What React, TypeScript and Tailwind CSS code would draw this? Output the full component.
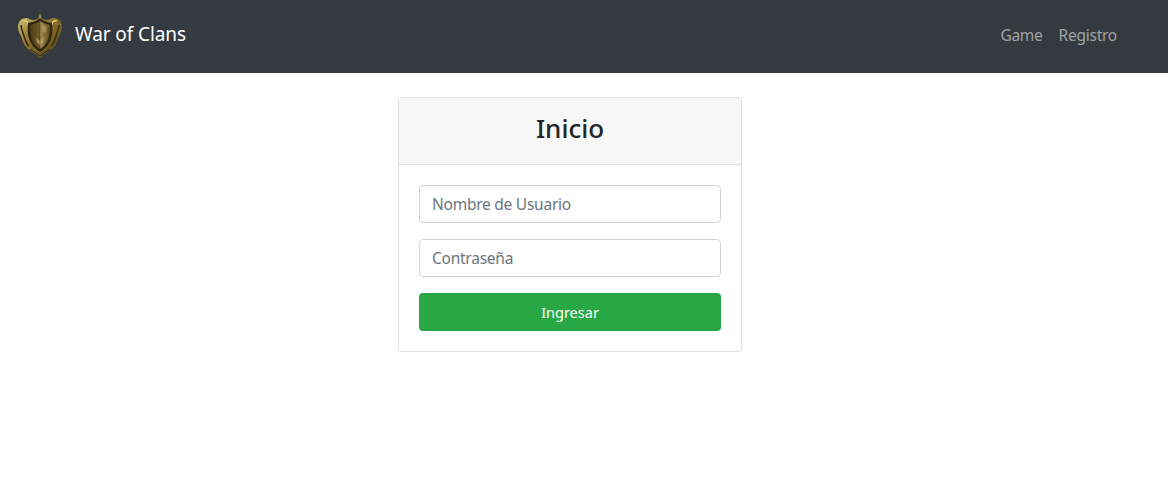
import React from 'react';

const Shield: React.FC = () => (
  <svg width="46" height="48" viewBox="0 0 46 48" aria-hidden="true">
    <defs>
      <linearGradient id="gold" x1="0" y1="0" x2="1" y2="1">
        <stop offset="0" stopColor="#cdb96a" />
        <stop offset="0.45" stopColor="#8a6f2a" />
        <stop offset="1" stopColor="#4f3e17" />
      </linearGradient>
      <linearGradient id="face" x1="0" y1="0" x2="1" y2="0">
        <stop offset="0" stopColor="#4a3c17" />
        <stop offset="0.49" stopColor="#6c5a26" />
        <stop offset="0.5" stopColor="#a08c4b" />
        <stop offset="1" stopColor="#5f4e1d" />
      </linearGradient>
    </defs>
    {/* spike */}
    <path d="M23 0l2.2 7h-4.4z" fill="#a58f4a" />
    {/* scrolls behind the shield */}
    <path d="M9 5C4 5 1 9 1 14c0 5 3 8 4 12 1 4 3 7 6 10 4 3 8 5 12 9 4-4 8-6 12-9 3-3 5-6 6-10 1-4 4-7 4-12 0-5-3-9-8-9-3 0-4 2-7 2l-7-1-7 1c-3 0-4-2-7-2z" fill="url(#gold)" />
    <path d="M4 12c0 4 2 7 3 11 1 4 2 7 5 10M42 12c0 4-2 7-3 11-1 4-2 7-5 10" fill="none" stroke="#332a11" strokeWidth="1.5" />
    <path d="M6 8c3-1 5 1 5 4M40 8c-3-1-5 1-5 4" fill="none" stroke="#e0d08a" strokeWidth="1.3" />
    <path d="M13 36l10 7 10-7" fill="none" stroke="#33290f" strokeWidth="1" />
    {/* shield */}
    <path d="M23 5c3 3 7 4 12 5 1 9 0 15-3 20-2 4-5 6-9 9-4-3-7-5-9-9-3-5-4-11-3-20 5-1 9-2 12-5z" fill="#2f2710" />
    <path d="M23 8c3 2 6 3 10 4 0 7-1 13-3 17-2 3-4 5-7 7-3-2-5-4-7-7-2-4-3-10-3-17 4-1 7-2 10-4z" fill="url(#face)" />
    <path d="M19 24l4 4 4-5-1 7-3 2-3-2z" fill="#bfae68" opacity="0.7" />
    <path d="M25 12l5 2-1 6-4-2z" fill="#c9ba78" opacity="0.45" />
    <path d="M23 8v28" stroke="#2f2710" strokeWidth="0.6" opacity="0.6" />
  </svg>
);

const Field: React.FC<{ placeholder: string; type?: string }> = ({ placeholder, type = 'text' }) => (
  <input
    type={type}
    placeholder={placeholder}
    className="block h-[38px] w-full rounded-[4px] border border-[#ced4da] bg-white px-3 text-[15.5px] tracking-[-0.25px] text-[#495057] placeholder:text-[#6c757d] outline-none"
  />
);

export default function App() {
  return (
    <div className="min-h-[480px] bg-white font-['Noto_Sans','Open_Sans',sans-serif] text-[#212529]">
      <nav className="flex h-[73px] items-center justify-between bg-[#343a40] pl-[17px] pr-[51px]">
        <a href="#" className="flex items-center gap-[12px] text-[19px] tracking-[-0.1px] text-white">
          <Shield />
          <span className="-translate-y-[2px]">War of Clans</span>
        </a>
        <div className="flex -translate-y-px gap-4 text-[15.5px] tracking-[-0.25px] text-[#a0a3a6]">
          <a href="#">Game</a>
          <a href="#">Registro</a>
        </div>
      </nav>

      <main className="flex w-[1140px] justify-center pt-6">
        <div className="w-[344px] overflow-hidden rounded-[4px] border border-[#dfdfdf]">
          <div className="flex h-[67px] items-center justify-center border-b border-[#dfdfdf] bg-[#f7f7f7] pb-[6px]">
            <h3 className="text-[26px] font-medium">Inicio</h3>
          </div>
          <form className="flex flex-col gap-4 p-5" onSubmit={(e) => e.preventDefault()}>
            <Field placeholder="Nombre de Usuario" />
            <Field placeholder="Contraseña" type="password" />
            <button
              type="submit"
              className="h-[38px] w-full rounded-[4px] bg-[#28a745] pt-[1px] text-[14.5px] text-white"
            >
              Ingresar
            </button>
          </form>
        </div>
      </main>
    </div>
  );
}
